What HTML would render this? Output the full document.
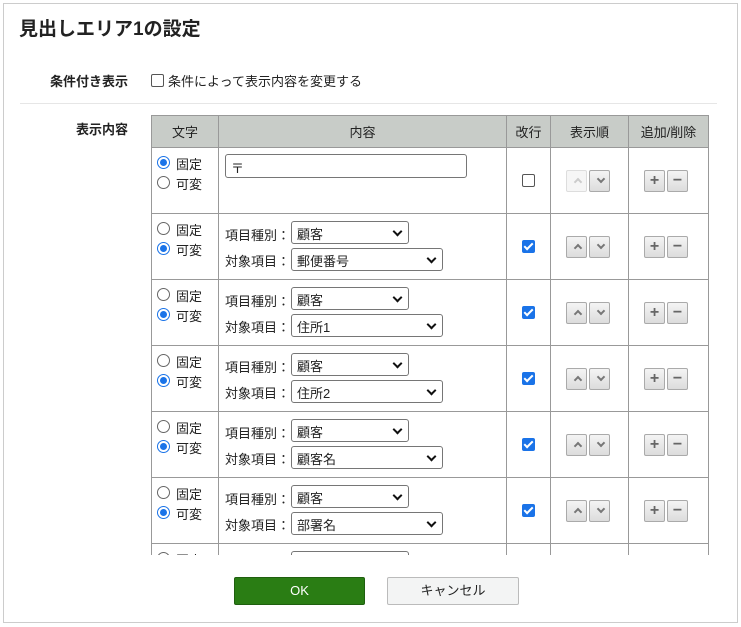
<!DOCTYPE html>
<html><head><meta charset="utf-8"><style>
*{box-sizing:border-box;margin:0;padding:0}
body{width:741px;height:627px;background:#fff;font-family:"Liberation Sans","Noto Sans CJK JP",sans-serif;font-size:13px;color:#222;position:relative;overflow:hidden}
.frame{position:absolute;left:3px;top:3px;width:735px;height:620px;border:1px solid #ccc}
h1{position:absolute;left:19px;top:14px;font-size:19px;font-weight:bold;color:#222}
.lbl{position:absolute;font-weight:bold;font-size:13px}
.hr{position:absolute;left:20px;top:103px;width:697px;height:1px;background:#e6e6e6}
.scroll{position:absolute;left:151px;top:115px;width:562px;height:440px;overflow:hidden}
table{border-collapse:collapse;table-layout:fixed;width:557px}
th{background:#c8ccc8;font-weight:normal;height:32px;border:1px solid #999;font-size:13px}
td{border:1px solid #999;height:66px;position:relative;vertical-align:top}
tr.r td{height:66px}
.rad{position:absolute;left:5px;width:13px;height:13px;border-radius:50%;border:1px solid #666;background:#fff}
.rad.on{border:1px solid #1a73e8}
.rad.on::after{content:"";position:absolute;left:2px;top:2px;width:7px;height:7px;border-radius:50%;background:#1a73e8}
.rt{position:absolute;left:24px;font-size:13px}
.inp{position:absolute;left:6px;top:6px;width:242px;height:24px;border:1px solid #767676;border-radius:3px;padding:3px 5px}
.k{position:absolute;left:6px;font-size:13px}
.sel{position:absolute;left:72px;height:23px;border:1px solid #767676;border-radius:3px;padding:2px 5px;font-size:13px}
.sel::after{content:"";position:absolute;right:7px;top:6px;width:5px;height:5px;border-right:2px solid #111;border-bottom:2px solid #111;transform:rotate(45deg)}
.cb{position:absolute;left:15px;top:26px;width:13px;height:13px;border-radius:2px}
.cb.off{border:1px solid #555;background:#fff}
.cb.on{background:#1a73e8}
.cb.on::after{content:"";position:absolute;left:4px;top:1px;width:3px;height:7px;border-right:2px solid #fff;border-bottom:2px solid #fff;transform:rotate(45deg)}
.b{position:absolute;top:22px;width:21px;height:22px;border:1px solid #aaa;border-radius:2px;background:linear-gradient(#f4f4f4,#dcdcdc);color:#666;text-align:center;font-size:10px;line-height:20px;font-weight:bold}
.b.dis{background:#f6f6f6;border-color:#ddd;color:#ccc}
.b.pm{font-size:16px;color:#666}
.up::after,.dn::after{content:"";position:absolute;left:8px;width:4px;height:4px;border-left:2px solid #777;border-top:2px solid #777}
.up::after{top:8px;transform:rotate(45deg)}
.dn::after{top:5px;transform:rotate(225deg)}
.dis.up::after{border-color:#ccc}
.ok{position:absolute;left:234px;top:577px;width:131px;height:28px;background:#2a7d14;border:1px solid #1f5f0f;border-radius:2px;color:#fff;text-align:center;line-height:26px;font-size:13px}
.cn{position:absolute;left:387px;top:577px;width:132px;height:28px;background:#f3f4f4;border:1px solid #bbb;border-radius:2px;text-align:center;line-height:26px;font-size:13px}
</style></head><body>
<div class="frame"></div>
<h1>見出しエリア1の設定</h1>
<div class="lbl" style="left:50px;top:71px">条件付き表示</div>
<div style="position:absolute;left:151px;top:74px;width:13px;height:13px;border:1px solid #555;border-radius:2px"></div>
<div style="position:absolute;left:168px;top:71px">条件によって表示内容を変更する</div>
<div class="hr"></div>
<div class="lbl" style="left:76px;top:119px">表示内容</div>
<div class="scroll"><table>
<colgroup><col style="width:67px"><col style="width:288px"><col style="width:44px"><col style="width:78px"><col style="width:80px"></colgroup>
<tr><th>文字</th><th>内容</th><th>改行</th><th>表示順</th><th>追加/削除</th></tr>
<tr><td><span class="rad on" style="top:8px"></span><span class="rt" style="top:6px">固定</span><span class="rad" style="top:28px"></span><span class="rt" style="top:26px">可変</span></td>
<td><div class="inp">〒</div></td><td><span class="cb off"></span></td>
<td><span class="b dis up" style="left:15px"></span><span class="b dn" style="left:38px"></span></td>
<td><span class="b pm" style="left:15px">+</span><span class="b pm" style="left:38px">−</span></td></tr>
<tr><td><span class="rad" style="top:8px"></span><span class="rt" style="top:6px">固定</span><span class="rad on" style="top:28px"></span><span class="rt" style="top:26px">可変</span></td>
<td><span class="k" style="top:11px">項目種別：</span><div class="sel" style="top:7px;width:118px">顧客</div><span class="k" style="top:37px">対象項目：</span><div class="sel" style="top:34px;width:152px">郵便番号</div></td><td><span class="cb on"></span></td>
<td><span class="b up" style="left:15px"></span><span class="b dn" style="left:38px"></span></td><td><span class="b pm" style="left:15px">+</span><span class="b pm" style="left:38px">−</span></td></tr>
<tr><td><span class="rad" style="top:8px"></span><span class="rt" style="top:6px">固定</span><span class="rad on" style="top:28px"></span><span class="rt" style="top:26px">可変</span></td>
<td><span class="k" style="top:11px">項目種別：</span><div class="sel" style="top:7px;width:118px">顧客</div><span class="k" style="top:37px">対象項目：</span><div class="sel" style="top:34px;width:152px">住所1</div></td><td><span class="cb on"></span></td>
<td><span class="b up" style="left:15px"></span><span class="b dn" style="left:38px"></span></td><td><span class="b pm" style="left:15px">+</span><span class="b pm" style="left:38px">−</span></td></tr>
<tr><td><span class="rad" style="top:8px"></span><span class="rt" style="top:6px">固定</span><span class="rad on" style="top:28px"></span><span class="rt" style="top:26px">可変</span></td>
<td><span class="k" style="top:11px">項目種別：</span><div class="sel" style="top:7px;width:118px">顧客</div><span class="k" style="top:37px">対象項目：</span><div class="sel" style="top:34px;width:152px">住所2</div></td><td><span class="cb on"></span></td>
<td><span class="b up" style="left:15px"></span><span class="b dn" style="left:38px"></span></td><td><span class="b pm" style="left:15px">+</span><span class="b pm" style="left:38px">−</span></td></tr>
<tr><td><span class="rad" style="top:8px"></span><span class="rt" style="top:6px">固定</span><span class="rad on" style="top:28px"></span><span class="rt" style="top:26px">可変</span></td>
<td><span class="k" style="top:11px">項目種別：</span><div class="sel" style="top:7px;width:118px">顧客</div><span class="k" style="top:37px">対象項目：</span><div class="sel" style="top:34px;width:152px">顧客名</div></td><td><span class="cb on"></span></td>
<td><span class="b up" style="left:15px"></span><span class="b dn" style="left:38px"></span></td><td><span class="b pm" style="left:15px">+</span><span class="b pm" style="left:38px">−</span></td></tr>
<tr><td><span class="rad" style="top:8px"></span><span class="rt" style="top:6px">固定</span><span class="rad on" style="top:28px"></span><span class="rt" style="top:26px">可変</span></td>
<td><span class="k" style="top:11px">項目種別：</span><div class="sel" style="top:7px;width:118px">顧客</div><span class="k" style="top:37px">対象項目：</span><div class="sel" style="top:34px;width:152px">部署名</div></td><td><span class="cb on"></span></td>
<td><span class="b up" style="left:15px"></span><span class="b dn" style="left:38px"></span></td><td><span class="b pm" style="left:15px">+</span><span class="b pm" style="left:38px">−</span></td></tr>
<tr><td><span class="rad" style="top:8px"></span><span class="rt" style="top:6px">固定</span></td>
<td><div class="sel" style="top:7px;width:118px"></div></td><td></td><td></td><td></td></tr>
</table></div>
<div class="ok">OK</div>
<div class="cn">キャンセル</div>
</body></html>
